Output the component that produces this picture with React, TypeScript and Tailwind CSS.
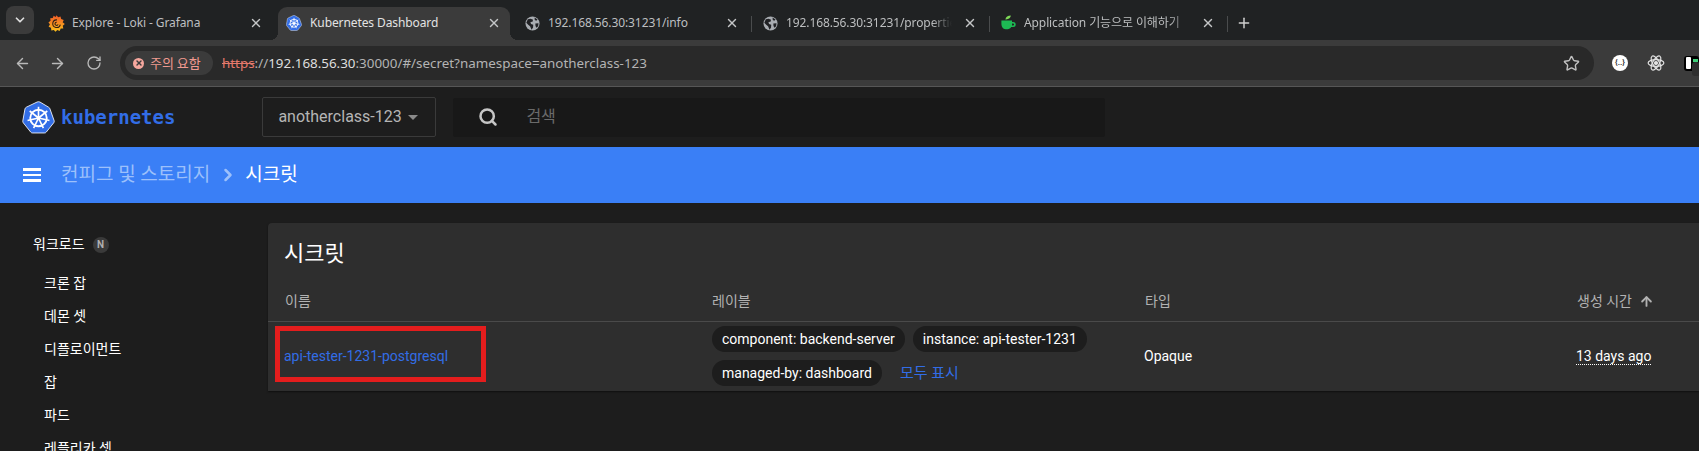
import React from 'react';
import { ArrowLeft, ArrowRight, ChevronDown, ChevronRight, Plus, RotateCw, Search, Star, X, ArrowUp } from 'lucide-react';

const Globe: React.FC = () => (
  <svg viewBox="0 0 16 16" className="w-[15px] h-[15px] shrink-0">
    <circle cx="8" cy="8" r="7.5" fill="#a9adb2" />
    <path d="M3 3.5 6 2.8 8.6 4 8 6 5.8 6.4 6.4 8.4 8.8 9.4 8.6 12.2 7 14.6 5.4 11 3.4 9.2 1.4 7.2ZM10.2 1.6 13.4 3.8 12 5 10.4 4.2ZM11 8 14.4 7.6 14 11 12.2 12.6 11.2 10.6Z" fill="#202124" />
  </svg>
);

const GrafanaIcon: React.FC = () => (
  <svg viewBox="0 0 16 16" className="w-[17px] h-[17px] shrink-0">
    <defs>
      <linearGradient id="gf" x1="0" y1="1" x2="0" y2="0">
        <stop offset="0" stopColor="#fcc21a" />
        <stop offset="1" stopColor="#f05a28" />
      </linearGradient>
    </defs>
    <path d="M8 .2 9.6 2.2 11.8 1.4 12.4 3.8 14.8 4.6 13.8 6.8 15.8 8.4 13.9 10.1 14.4 12.6 12 12.8 10.9 15 8.8 14 7 15.8 5.5 14 3.2 14.5 2.8 12.1.6 11 1.8 8.8.4 7 2.4 5.5 2.1 3.1 4.5 2.9 5.3.8 7.2 1.9Z" fill="url(#gf)" />
    <path d="M8.4 4.6a3.6 3.6 0 1 0 3.2 4.4M8.2 6.8a1.5 1.5 0 1 0 1.3 2" fill="none" stroke="#2a1c14" strokeWidth="1" />
  </svg>
);

const CupIcon: React.FC = () => (
  <svg viewBox="0 0 16 16" className="w-4 h-4 shrink-0">
    <path d="M5.4 4.4C5.6 2 8 .6 10.8.6 10.8 3 8.6 4.6 5.4 4.4Z" fill="#7ed957" />
    <path d="M1.4 5.6H12V7h1.2a2 2 0 0 1 0 5H11.2c-.8 1.4-2 2.2-3.6 2.2H5.6c-2.6 0-4.2-2.4-4.2-5.4ZM12 8.4v2.2h1a1.1 1.1 0 0 0 0-2.2Z" fill="#1db954" />
  </svg>
);

const K8sLogo: React.FC<{ className: string }> = ({ className }) => {
  const angles = [0, 51.43, 102.86, 154.29, 205.71, 257.14, 308.57];
  return (
    <svg viewBox="0 0 32 32" className={className}>
      <path d="M14.6 1 4.2 6q-1 .5-1.3 1.6L.8 19.2q-.2 1 .4 1.9l7.2 9q.7.9 1.8.9h11.6q1.1 0 1.8-.9l7.2-9q.6-.9.4-1.9L27.1 7.6q-.3-1.1-1.3-1.6L17.4 1q-1.4-.6-2.8 0Z" fill="#326de6" stroke="#fff" strokeWidth="0.8" />
      <g stroke="#fff" fill="none">
        <circle cx="16" cy="16.5" r="8" strokeWidth="1.8" />
        <circle cx="16" cy="16.5" r="1.6" fill="#fff" strokeWidth="0.6" />
        {angles.map(a => (
          <g key={a} transform={`rotate(${a} 16 16.5)`}>
            <path d="M16 16.5V5.6" strokeWidth="1.6" />
          </g>
        ))}
      </g>
    </svg>
  );
};

const Tab: React.FC<{ icon: React.ReactNode; title: string; active?: boolean; fade?: boolean }> = ({ icon, title, active, fade }) => (
  <div className={`relative flex items-center w-[232px] h-[33px] pl-[8px] pr-[9px] pb-[1px] rounded-t-[9px] ${active ? 'bg-[#3b3b3b] text-[#e3e3e3]' : 'text-[#bdbfc0]'}`}>
    {active && <span className="absolute bottom-0 -left-2 w-2 h-2 bg-[radial-gradient(circle_at_0_0,transparent_8px,#3b3b3b_8px)]" />}
    {active && <span className="absolute bottom-0 -right-2 w-2 h-2 bg-[radial-gradient(circle_at_100%_0,transparent_8px,#3b3b3b_8px)]" />}
    <span className="w-4 flex justify-center shrink-0">{icon}</span>
    <span className={`ml-[8px] w-[166px] whitespace-nowrap overflow-hidden text-[12px] tracking-[-0.1px] ${fade ? '[mask-image:linear-gradient(to_right,black_88%,transparent)]' : ''}`}>{title}</span>
    <X size={14} strokeWidth={2.4} className="ml-auto text-[#c4c6c7] shrink-0" />
  </div>
);

const Sep: React.FC<{ show?: boolean }> = ({ show }) => (
  <div className="w-[6px] h-[33px] flex items-center justify-center shrink-0">
    {show && <span className="w-px h-4 bg-[#4a4c4d]" />}
  </div>
);

const Chip: React.FC<{ text: string }> = ({ text }) => (
  <span className="h-[26px] px-[10px] rounded-full bg-[#1d1d1d] text-white text-[14px] leading-[26px] whitespace-nowrap">{text}</span>
);

const NAV = ['크론 잡', '데몬 셋', '디플로이먼트', '잡', '파드', '레플리카 셋'];

const App: React.FC = () => {
  return (
    <div className="h-[451px] w-full overflow-hidden bg-[#1d1d1d] [font-family:Roboto,'Noto_Sans_CJK_KR',sans-serif]">
      {/* tab strip */}
      <div className="h-10 flex items-end bg-[#202223] pl-[6px] [font-family:'Noto_Sans','Noto_Sans_CJK_KR',sans-serif]">
        <div className="w-[28px] h-[28px] mb-[6px] mr-[6px] rounded-lg bg-[#3b3b3b] flex items-center justify-center shrink-0">
          <ChevronDown size={14} strokeWidth={3} className="text-[#dedede]" />
        </div>
        <Tab icon={<GrafanaIcon />} title="Explore - Loki - Grafana" />
        <Sep />
        <Tab active icon={<K8sLogo className="w-4 h-4 shrink-0" />} title="Kubernetes Dashboard" />
        <Sep />
        <Tab icon={<Globe />} title="192.168.56.30:31231/info" />
        <Sep show />
        <Tab fade icon={<Globe />} title="192.168.56.30:31231/properties" />
        <Sep show />
        <Tab fade icon={<CupIcon />} title="Application 기능으로 이해하기" />
        <Sep show />
        <Plus size={16} strokeWidth={2.2} className="text-[#d0d0d0] ml-[6px] mb-[9px]" />
      </div>

      {/* toolbar */}
      <div className="h-[47px] bg-[#3b3b3b] border-b border-[#565656] flex items-center pl-[14px]">
        <ArrowLeft size={17} strokeWidth={2} className="text-[#b9b9b9]" />
        <ArrowRight size={17} strokeWidth={2} className="text-[#b9b9b9] ml-[18px]" />
        <RotateCw size={16} strokeWidth={2} className="text-[#b9b9b9] ml-[20px]" />
        <div className="ml-[18px] w-[1474px] h-[34px] rounded-full bg-[#292929] flex items-center pl-[5px] pr-[14px] shrink-0">
          <div className="h-6 w-[88px] rounded-full bg-[#3b3b3b] flex items-center pl-2 text-[#f09a90] text-[13px] shrink-0">
            <span className="w-[11px] h-[11px] rounded-full bg-[#f6a79e] flex items-center justify-center mr-[6px] shrink-0">
              <X size={8} strokeWidth={4} className="text-[#3b3b3b]" />
            </span>
            <span className="whitespace-nowrap [font-family:'Noto_Sans_CJK_KR',sans-serif]">주의 요함</span>
          </div>
          <div className="ml-[9px] text-[13.4px] text-[#b4b4b4] whitespace-nowrap [font-family:'Noto_Sans',sans-serif]">
            <span className="text-[#e5796c] line-through">https</span>://<span className="text-[#dedede]">192.168.56.30</span>:30000/#/secret?namespace=anotherclass-123
          </div>
          <Star size={17} strokeWidth={2} className="ml-auto text-[#c0c0c0]" />
        </div>
        <div className="flex items-center ml-[18px]">
          <span className="w-[16px] h-[16px] rounded-full bg-white text-[#333] text-[8px] font-bold flex items-center justify-center">{'{..}'}</span>
          <svg viewBox="0 0 24 24" className="w-[18px] h-[18px] ml-[19px] text-[#e2e2e2]" fill="none" stroke="currentColor" strokeWidth="1.6">
            <ellipse cx="12" cy="12" rx="10.5" ry="4.4" />
            <ellipse cx="12" cy="12" rx="10.5" ry="4.4" transform="rotate(60 12 12)" />
            <ellipse cx="12" cy="12" rx="10.5" ry="4.4" transform="rotate(120 12 12)" />
            <circle cx="12" cy="12" r="2" fill="currentColor" />
          </svg>
          <div className="relative w-[15px] h-[15px] ml-[19px] bg-black rounded-[3px] shrink-0">
            <span className="absolute left-[2px] top-[1px] w-[5px] h-[12px] bg-white rounded-[1px]" />
            <span className="absolute left-[9px] top-[3px] w-[5px] h-[3px] bg-[#3fd07a]" />
            <span className="absolute left-[8px] top-[6px] w-[8px] h-[14px] bg-[#2f2f2f] rounded-[3px]" />
          </div>
        </div>
      </div>

      {/* dashboard header */}
      <div className="h-[60px] flex items-center pl-[22px] bg-[#1d1d1d]">
        <K8sLogo className="w-[33px] h-[33px] shrink-0" />
        <span className="ml-[6px] text-[19px] font-bold text-[#326de6] [font-family:'DejaVu_Sans_Mono',monospace]">kubernetes</span>
        <div className="ml-[87px] w-[174px] h-10 border border-[#3a3a3a] rounded-[2px] flex items-center pl-[15px] text-[16px] text-[#b5b5b5] shrink-0">
          anotherclass-123
          <span className="ml-[6px] w-0 h-0 border-x-[5px] border-x-transparent border-t-[5px] border-t-[#8a8a8a]" />
        </div>
        <div className="ml-[17px] w-[652px] h-[39px] bg-[#181818] rounded-[2px] flex items-center pl-[25px] shrink-0">
          <Search size={20} strokeWidth={3} className="text-[#c6c6c6]" />
          <span className="ml-[28px] text-[16px] text-[#6a6a6a]">검색</span>
        </div>
      </div>

      {/* breadcrumb bar */}
      <div className="h-[56px] bg-[#3a7ff6] flex items-center pl-[23px] text-[19px]">
        <div className="w-[18px] flex flex-col gap-[3px] shrink-0">
          <span className="h-[2.5px] bg-white" />
          <span className="h-[2.5px] bg-white" />
          <span className="h-[2.5px] bg-white" />
        </div>
        <span className="ml-[20px] text-[#9cc0fb]">컨피그 및 스토리지</span>
        <ChevronRight size={20} strokeWidth={3} className="ml-[8px] text-[#9cc0fb]" />
        <span className="ml-[7px] text-white">시크릿</span>
      </div>

      <div className="flex">
        {/* sidebar */}
        <div className="w-[268px] shrink-0 pt-[25px] text-white text-[14px]">
          <div className="h-[33px] flex items-center pl-[33px]">
            워크로드
            <span className="ml-[8px] w-4 h-4 rounded-full bg-[#3a3a3a] text-[#b0b0b0] text-[10px] font-bold flex items-center justify-center">N</span>
          </div>
          <div className="pt-[6px]">
            {NAV.map(item => (
              <div key={item} className="h-[33px] flex items-center pl-[44px]">{item}</div>
            ))}
          </div>
        </div>

        {/* secrets card */}
        <div className="flex-1 mt-[20px] h-[168px] bg-[#2e2e2e] rounded-tl-[4px] shadow-[0_1px_2px_rgba(0,0,0,0.5)]">
          <div className="h-[59px] flex items-center pl-[16px] pt-[2px] text-[22px] text-white">시크릿</div>
          <div className="h-10 grid grid-cols-[427px_433px_432px_1fr] items-center pl-[17px] border-b border-[#4a4a4a] text-[14px] text-[#b2b2b2]">
            <span>이름</span>
            <span>레이블</span>
            <span>타입</span>
            <span className="flex items-center">생성 시간<ArrowUp size={15} strokeWidth={3} className="ml-[7px]" /></span>
          </div>
          <div className="h-[68px] grid grid-cols-[428px_432px_432px_1fr] items-center pl-[16px] text-[14px] text-white">
            <div className="relative">
              <span className="text-[#326de6] whitespace-nowrap">api-tester-1231-postgresql</span>
              <span className="absolute -left-[9px] -top-[20px] w-[211px] h-[56px] border-[5px] border-[#e41d1d]" />
            </div>
            <div className="flex flex-col gap-2">
              <div className="flex gap-2">
                <Chip text="component: backend-server" />
                <Chip text="instance: api-tester-1231" />
              </div>
              <div className="flex items-center">
                <Chip text="managed-by: dashboard" />
                <span className="ml-[18px] text-[15px] text-[#326de6]">모두 표시</span>
              </div>
            </div>
            <span>Opaque</span>
            <span><span className="border-b border-dotted border-white">13 days ago</span></span>
          </div>
        </div>
      </div>
    </div>
  );
};

export default App;
